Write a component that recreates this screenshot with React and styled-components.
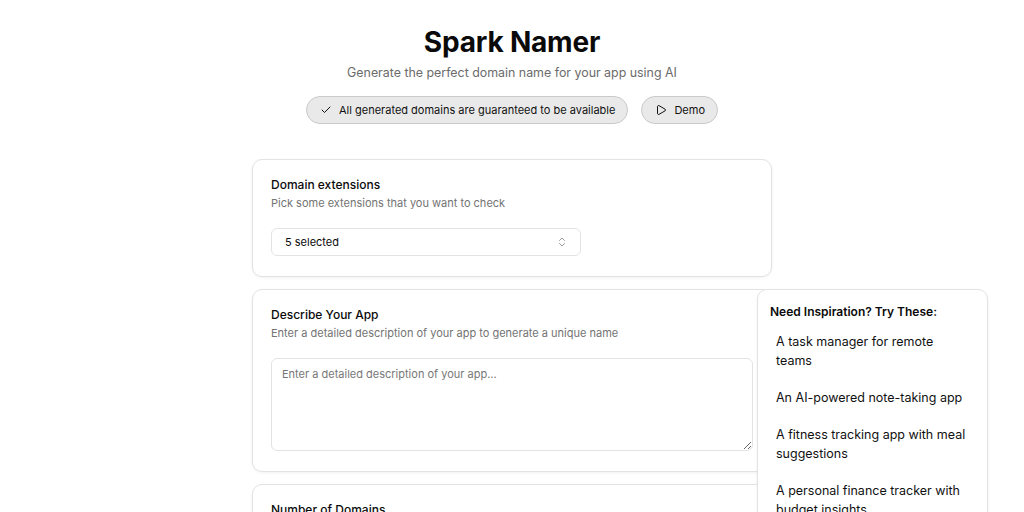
import React, { useState } from 'react';
import styled, { createGlobalStyle } from 'styled-components';
import { Check, Play, ChevronsUpDown } from 'lucide-react';

const GlobalStyle = createGlobalStyle`
  html, body {
    margin: 0;
    padding: 0;
    background: #ffffff;
    font-family: Inter, 'Noto Sans', sans-serif;
    color: #0a0a0a;
  }
  * { box-sizing: border-box; }
`;

const ideas = [
  'A task manager for remote teams',
  'An AI-powered note-taking app',
  'A fitness tracking app with meal suggestions',
  'A personal finance tracker with budget insights',
];

const App = () => {
  const [description, setDescription] = useState('');

  return (
    <>
      <GlobalStyle />
      <Page>
        <Header>
          <Title>Spark Namer</Title>
          <Subtitle>Generate the perfect domain name for your app using AI</Subtitle>
          <Badges>
            <Pill>
              <Check size={12} strokeWidth={2} />
              All generated domains are guaranteed to be available
            </Pill>
            <Pill as="button">
              <Play size={12} strokeWidth={2} />
              Demo
            </Pill>
          </Badges>
        </Header>

        <Column>
          <Card>
            <CardTitle>Domain extensions</CardTitle>
            <CardDesc>Pick some extensions that you want to check</CardDesc>
            <Select>
              <span>5 selected</span>
              <ChevronsUpDown size={12} color="#8a8a8a" strokeWidth={1.8} />
            </Select>
          </Card>

          <Card>
            <CardTitle>Describe Your App</CardTitle>
            <CardDesc>Enter a detailed description of your app to generate a unique name</CardDesc>
            <TextArea
              value={description}
              placeholder="Enter a detailed description of your app..."
              onChange={(e) => setDescription(e.target.value)}
            />
          </Card>

          <Card>
            <CardTitle>Number of Domains</CardTitle>
            <CardDesc>How many domain names do you want to generate</CardDesc>
          </Card>
        </Column>

        <Inspiration>
          <InspTitle>Need Inspiration? Try These:</InspTitle>
          <IdeaList>
            {ideas.map((idea) => (
              <Idea key={idea}>{idea}</Idea>
            ))}
          </IdeaList>
        </Inspiration>
      </Page>
    </>
  );
};

const Page = styled.div`
  position: relative;
  width: 1024px;
  min-height: 512px;
  padding-top: 24px;
`;

const Header = styled.header`
  display: flex;
  flex-direction: column;
  align-items: center;
`;

const Title = styled.h1`
  margin: 0;
  font-size: 28px;
  line-height: 36px;
  font-weight: 700;
  letter-spacing: -0.2px;
  color: #0a0a0a;
`;

const Subtitle = styled.p`
  margin: 3px 0 0;
  font-size: 12.4px;
  line-height: 20px;
  color: #6b6b6b;
`;

const Badges = styled.div`
  display: flex;
  gap: 13px;
  margin-top: 13px;
`;

const Pill = styled.div`
  display: flex;
  align-items: center;
  gap: 7px;
  height: 28px;
  padding: 0 12px 0 13px;
  border-radius: 999px;
  border: 1px solid #c9c9c9;
  background: #e9e9e9;
  font-family: Inter, sans-serif;
  font-size: 11px;
  color: #111;
  cursor: pointer;
`;

const Column = styled.main`
  width: 520px;
  margin: 35px auto 0;
  display: flex;
  flex-direction: column;
  gap: 12px;
`;

const Card = styled.section`
  border: 1px solid #e3e3e3;
  border-radius: 10px;
  background: #fff;
  box-shadow: 0 1px 3px rgba(0, 0, 0, 0.06);
  padding: 16px 18px 20px;
`;

const CardTitle = styled.h3`
  margin: 0;
  font-size: 12px;
  line-height: 18px;
  font-weight: 500;
  color: #0a0a0a;
`;

const CardDesc = styled.p`
  margin: 1px 0 0;
  font-size: 11px;
  line-height: 16px;
  color: #737373;
`;

const Select = styled.div`
  display: flex;
  align-items: center;
  justify-content: space-between;
  width: 310px;
  height: 28px;
  margin-top: 17px;
  padding: 0 12px 0 13px;
  border: 1px solid #e3e3e3;
  border-radius: 6px;
  font-size: 11px;
  color: #0a0a0a;
`;

const TextArea = styled.textarea`
  display: block;
  width: 100%;
  height: 93px;
  margin-top: 17px;
  padding: 7px 10px;
  border: 1px solid #e3e3e3;
  border-radius: 6px;
  font-family: Inter, sans-serif;
  font-size: 11px;
  line-height: 16px;
  resize: vertical;
  outline: none;
  &::placeholder {
    color: #777;
  }
`;

const Inspiration = styled.aside`
  position: absolute;
  top: 289px;
  left: 757px;
  width: 231px;
  min-height: 240px;
  padding: 13px 12px;
  border: 1px solid #e3e3e3;
  border-radius: 10px;
  background: #fff;
  box-shadow: 0 1px 3px rgba(0, 0, 0, 0.06);
`;

const InspTitle = styled.h4`
  margin: 0;
  font-size: 12px;
  line-height: 18px;
  font-weight: 600;
  color: #0a0a0a;
`;

const IdeaList = styled.div`
  display: flex;
  flex-direction: column;
  gap: 18px;
  margin-top: 11px;
`;

const Idea = styled.div`
  padding: 0 6px;
  font-size: 12.5px;
  line-height: 19px;
  color: #111;
  cursor: pointer;
`;

export default App;
